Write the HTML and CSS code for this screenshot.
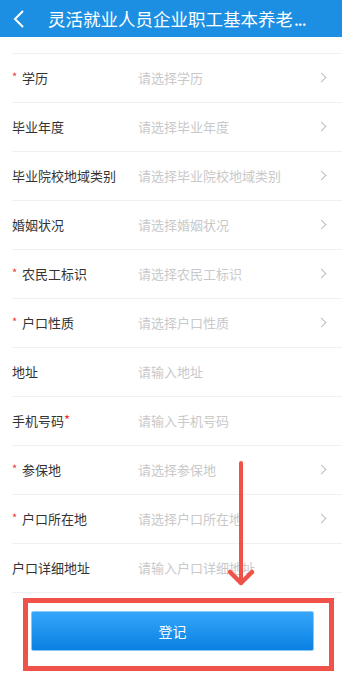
FILE: index.html
```html
<!DOCTYPE html>
<html lang="zh-CN">
<head>
<meta charset="utf-8">
<link rel="stylesheet" href="styles.css">
</head>
<body>
<div class="page">
  <header class="nav">
    <svg class="back" width="14" height="20" viewBox="0 0 14 20"><path d="M11 2 L3 10 L11 18" fill="none" stroke="#fff" stroke-width="2"/></svg>
    <div class="title">灵活就业人员企业职工基本养老<span class="dots">...</span></div>
  </header>
  <div class="list">
    <div class="prev"></div>
    <div class="row"><div class="label"><span class="req">*</span>学历</div><div class="ph">请选择学历</div><span class="chev"></span></div>
    <div class="row"><div class="label">毕业年度</div><div class="ph">请选择毕业年度</div><span class="chev"></span></div>
    <div class="row"><div class="label">毕业院校地域类别</div><div class="ph">请选择毕业院校地域类别</div><span class="chev"></span></div>
    <div class="row"><div class="label">婚姻状况</div><div class="ph">请选择婚姻状况</div><span class="chev"></span></div>
    <div class="row"><div class="label"><span class="req">*</span>农民工标识</div><div class="ph">请选择农民工标识</div><span class="chev"></span></div>
    <div class="row"><div class="label"><span class="req">*</span>户口性质</div><div class="ph">请选择户口性质</div><span class="chev"></span></div>
    <div class="row"><div class="label">地址</div><div class="ph">请输入地址</div></div>
    <div class="row"><div class="label">手机号码<span class="req after">*</span></div><div class="ph">请输入手机号码</div></div>
    <div class="row"><div class="label"><span class="req">*</span>参保地</div><div class="ph">请选择参保地</div><span class="chev"></span></div>
    <div class="row"><div class="label"><span class="req">*</span>户口所在地</div><div class="ph">请选择户口所在地</div><span class="chev"></span></div>
    <div class="row"><div class="label">户口详细地址</div><div class="ph">请输入户口详细地址</div></div>
  </div>
  <div class="footer">
    <button class="btn">登记</button>
  </div>
  <div class="mark-box"></div>
  <svg class="mark-arrow" width="30" height="132" viewBox="0 0 30 132"><path d="M15 3 L15 123" stroke="#f0524a" stroke-width="4" stroke-linecap="round" fill="none"/><path d="M4 112 L15 123 L26 112" stroke="#f0524a" stroke-width="4.5" stroke-linecap="round" stroke-linejoin="round" fill="none"/></svg>
</div>
</body>
</html>
```
FILE: styles.css
```css
* { box-sizing: border-box; }
html, body { margin: 0; padding: 0; }
body {
  width: 342px;
  height: 676px;
  overflow: hidden;
  background: #fff;
  font-family: "Noto Sans CJK SC", "Noto Sans", sans-serif;
}
.page { position: relative; width: 342px; height: 676px; }
.nav {
  height: 37px;
  background: #1c8fe3;
  display: flex;
  align-items: center;
  padding-left: 12px;
}
.back { display: block; margin-right: 22px; }
.title {
  color: #fff;
  font-size: 17.5px;
  line-height: 20px;
  white-space: nowrap;
}
.dots { letter-spacing: -1px; margin-left: 1px; }
.list { padding-left: 12px; }
.prev { height: 17px; border-bottom: 1px solid #f0f0f0; }
.row {
  height: 49px;
  border-bottom: 1px solid #f0f0f0;
  display: flex;
  align-items: center;
  padding-bottom: 1px;
}
.label {
  width: 126px;
  font-size: 13px;
  color: #333;
  white-space: nowrap;
  display: flex;
  align-items: center;
}
.req {
  color: #e8362f;
  font-size: 11px;
  width: 10px;
  margin-top: -3px;
}
.req.after { width: auto; font-size: 13px; margin-top: -2px; }
.ph {
  flex: 1;
  font-size: 13px;
  color: #c9c9c9;
  white-space: nowrap;
}
.chev {
  width: 7px;
  height: 7px;
  border-top: 1px solid #bdbdbd;
  border-right: 1px solid #bdbdbd;
  transform: rotate(45deg);
  margin-right: 17px;
}
.footer { padding: 18px 0 0 31px; }
.btn {
  display: block;
  width: 283px;
  height: 40px;
  border: 1px solid #8cc8f2;
  border-radius: 2px;
  background: linear-gradient(#35a6fa, #0980e2);
  color: #fff;
  font-family: "Noto Sans CJK SC", sans-serif;
  font-size: 14px;
  padding: 0;
}
.mark-box {
  position: absolute;
  left: 23px;
  top: 598px;
  width: 311px;
  height: 73px;
  border: 5px solid #f0524a;
}
.mark-arrow {
  position: absolute;
  left: 226px;
  top: 460px;
}
```
